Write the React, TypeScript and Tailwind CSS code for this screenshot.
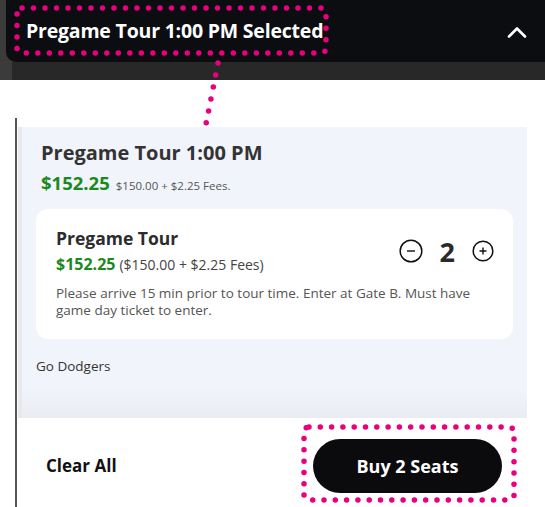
import React from "react";

const font = { fontFamily: '"Open Sans", "Liberation Sans", sans-serif' };

function Annotations() {
  const pink = "#e8007f";
  return (
    <svg className="absolute inset-0 pointer-events-none" width={545} height={507}>
      <rect x={17} y={8} width={309} height={45} rx={5} fill="none" stroke={pink} strokeWidth={5.5} strokeDasharray="0 11.5" strokeLinecap="round" />
      <line x1={218} y1={63} x2={206} y2={124} stroke={pink} strokeWidth={5.5} strokeDasharray="0 12.2" strokeLinecap="round" />
      <rect x={304} y={427} width={210} height={73} rx={5} fill="none" stroke={pink} strokeWidth={5.5} strokeDasharray="0 11.3" strokeLinecap="round" />
    </svg>
  );
}

export default function App() {
  return (
    <div className="relative w-[545px] h-[507px] overflow-hidden bg-white" style={font}>
      <div className="h-[80px] bg-[#3b3b3b] flex flex-col">
        <div className="h-[62px] ml-[6px] rounded-bl-[10px] bg-[#0c0d11] flex items-center justify-between pl-[20px] pr-[18px]">
          <span className="text-white font-bold text-[19.5px] tracking-[-0.2px]">Pregame Tour 1:00 PM Selected</span>
          <svg width="20" height="14" viewBox="0 0 20 14" className="mt-[1px]">
            <path d="M2 11.5 L10 3.5 L18 11.5" fill="none" stroke="white" strokeWidth="2.6" strokeLinecap="round" strokeLinejoin="round" />
          </svg>
        </div>
        <div className="flex-1 ml-[12px] bg-[#282828]" />
      </div>
      <div className="ml-[15px] mt-[38px] border-l-[2px] border-[#555555] h-[389px] pt-[9px]">
        <div className="ml-[1px] w-[509px] h-[291px] bg-[#f1f4fb] border-l-[4px] border-[#e7e9ef] relative flex flex-col">
          <div className="absolute left-0 right-0 bottom-0 h-[30px] bg-gradient-to-b from-[#f1f4fb] to-[#eaecf2]" />
          <div className="relative pl-[19px] pt-[13px]">
            <div className="text-[20px] font-bold text-[#333333] leading-[26px]">Pregame Tour 1:00 PM</div>
            <div className="flex items-baseline gap-[6px] mt-[3px]">
              <span className="text-[18.5px] font-bold text-[#1b8a1e]">$152.25</span>
              <span className="text-[11.5px] text-[#555555]">$150.00 + $2.25 Fees.</span>
            </div>
          </div>
          <div className="relative ml-[14px] mr-[14px] mt-[12px] bg-white rounded-[12px] pl-[20px] pr-[20px] pt-[18px] pb-[20px]">
            <div className="flex justify-between items-center">
              <div>
                <div className="text-[17.5px] font-bold text-[#2c2c2c] leading-[22px]">Pregame Tour</div>
                <div className="flex items-baseline gap-[4px] mt-[3px]">
                  <span className="text-[16px] font-bold text-[#1b8a1e]">$152.25</span>
                  <span className="text-[14px] text-[#444444]">($150.00 + $2.25 Fees)</span>
                </div>
              </div>
              <div className="flex items-center mr-[-1px]">
                <svg width="24" height="24" viewBox="0 0 24 24">
                  <circle cx="12" cy="12" r="10.8" fill="none" stroke="#111" strokeWidth="1.5" />
                  <path d="M8 12 H16" stroke="#111" strokeWidth="1.4" />
                </svg>
                <span className="ml-[17px] mr-[17px] text-[27px] font-bold text-[#2a2a2a] leading-none">2</span>
                <svg width="22" height="22" viewBox="0 0 22 22">
                  <circle cx="11" cy="11" r="9.8" fill="none" stroke="#111" strokeWidth="1.5" />
                  <path d="M7.5 11 H14.5 M11 7.5 V14.5" stroke="#111" strokeWidth="1.4" />
                </svg>
              </div>
            </div>
            <div className="mt-[9px] text-[13.5px] leading-[17px] text-[#555555]">
              Please arrive 15 min prior to tour time. Enter at Gate B. Must have game day ticket to enter.
            </div>
          </div>
          <div className="relative pl-[14px] mt-[17px] text-[13.5px] text-[#333333]">Go Dodgers</div>
        </div>
        <div className="flex items-center justify-between pl-[29px] pr-[43px] pt-[21px] w-[528px]">
          <span className="text-[17px] font-bold text-[#111111]">Clear All</span>
          <div className="w-[189px] h-[54px] rounded-full bg-[#0b0b0d] flex items-center justify-center">
            <span className="text-white font-bold text-[18px]">Buy 2 Seats</span>
          </div>
        </div>
      </div>
      <Annotations />
    </div>
  );
}
